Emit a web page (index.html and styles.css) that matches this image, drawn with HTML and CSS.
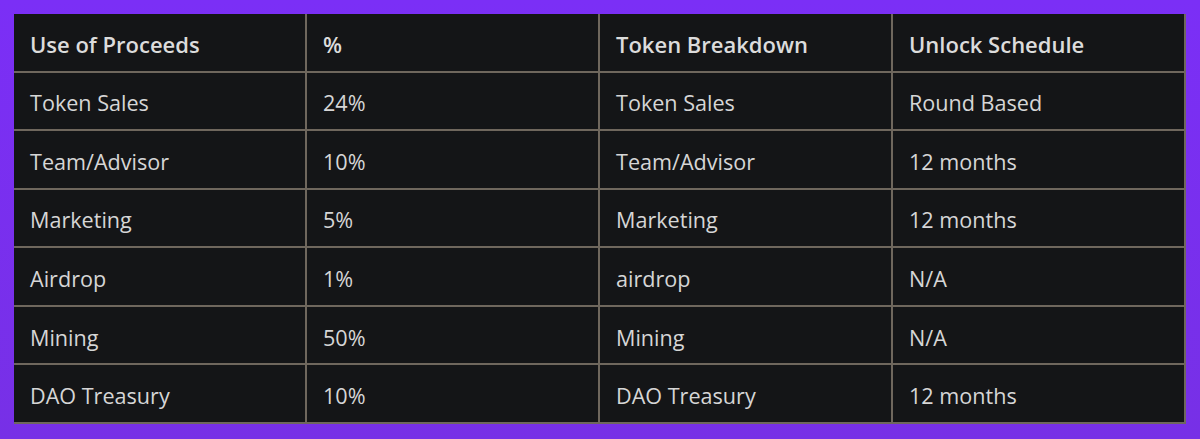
FILE: index.html
```html
<!DOCTYPE html>
<html lang="en">
<head>
<meta charset="utf-8">
<title>Tokenomics</title>
<link rel="stylesheet" href="styles.css">
</head>
<body>
<div class="frame">
  <div class="table">
    <div class="cell head">Use of Proceeds</div>
    <div class="cell head">%</div>
    <div class="cell head">Token Breakdown</div>
    <div class="cell head">Unlock Schedule</div>

    <div class="cell">Token Sales</div>
    <div class="cell">24%</div>
    <div class="cell">Token Sales</div>
    <div class="cell">Round Based</div>

    <div class="cell">Team/Advisor</div>
    <div class="cell">10%</div>
    <div class="cell">Team/Advisor</div>
    <div class="cell">12 months</div>

    <div class="cell">Marketing</div>
    <div class="cell">5%</div>
    <div class="cell">Marketing</div>
    <div class="cell">12 months</div>

    <div class="cell">Airdrop</div>
    <div class="cell">1%</div>
    <div class="cell">airdrop</div>
    <div class="cell">N/A</div>

    <div class="cell">Mining</div>
    <div class="cell">50%</div>
    <div class="cell">Mining</div>
    <div class="cell">N/A</div>

    <div class="cell">DAO Treasury</div>
    <div class="cell">10%</div>
    <div class="cell">DAO Treasury</div>
    <div class="cell">12 months</div>
  </div>
</div>
</body>
</html>
```

FILE: styles.css
```css
html, body {
  margin: 0;
  padding: 0;
}
body {
  width: 1200px;
  height: 439px;
  background: linear-gradient(180deg, #7b2ff6 0%, #7730e6 100%);
  font-family: "Open Sans", "Noto Sans", "Liberation Sans", sans-serif;
  overflow: hidden;
}
.frame {
  padding: 14px;
}
.table {
  width: 1172px;
  height: 410px;
  display: grid;
  grid-template-columns: repeat(4, 1fr);
  grid-template-rows: repeat(7, 1fr);
  background: #141517;
}
.cell {
  display: flex;
  align-items: center;
  padding: 4px 16px 0 16px;
  border-right: 2px solid #6f675d;
  border-bottom: 2px solid #6f675d;
  color: #d6d6d6;
  font-size: 21.6px;
}
.head {
  font-size: 22px;
  font-weight: 600;
  color: #dcdcdc;
}
```
